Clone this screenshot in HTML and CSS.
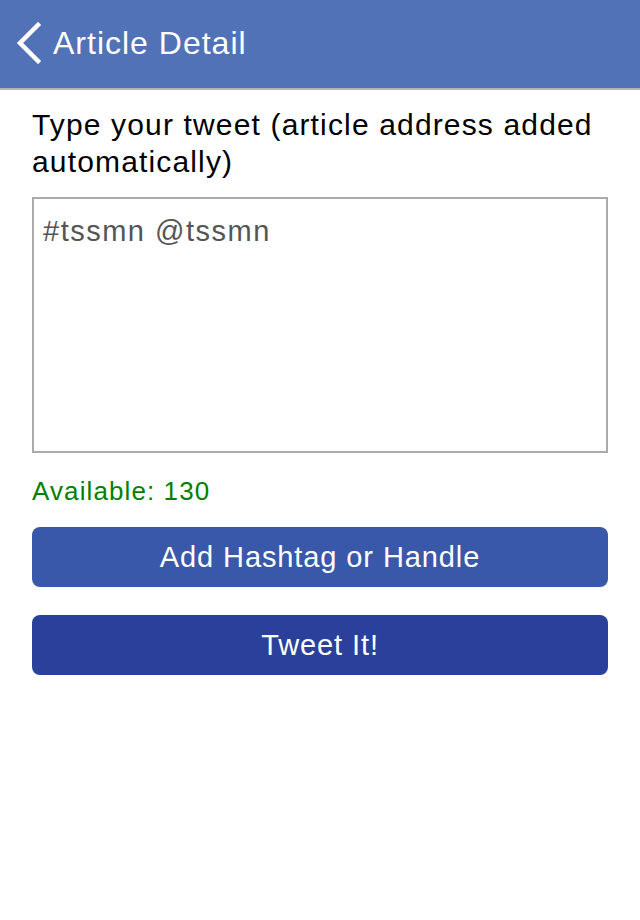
FILE: index.html
```html
<!DOCTYPE html>
<html lang="en">
<head>
    <meta charset="UTF-8">
    <meta name="viewport" content="width=device-width, initial-scale=1.0">
    <title>Article Detail</title>
    <link rel="stylesheet" href="styles.css">
</head>
<body>
    <header class="nav-bar">
        <button class="back-button">
            <svg class="chevron" width="28" height="42" viewBox="0 0 28 42">
                <path d="M24 3 L6 21 L24 39" fill="none" stroke="#fff" stroke-width="4.5" stroke-linecap="square"/>
            </svg>
            <span class="nav-title">Article Detail</span>
        </button>
    </header>
    <main class="content">
        <p class="label">Type your tweet (article address added automatically)</p>
        <textarea class="tweet-box">#tssmn @tssmn</textarea>
        <p class="counter">Available: 130</p>
        <button class="btn btn-add">Add Hashtag or Handle</button>
        <button class="btn btn-tweet">Tweet It!</button>
    </main>
</body>
</html>
```

FILE: styles.css
```css
body {
    margin: 0;
    padding: 0;
    background-color: #fff;
    font-family: "Liberation Sans", Arial, sans-serif;
    color: #000;
}
.nav-bar {
    height: 88px;
    background-color: #5272b8;
    border-bottom: 2px solid #b4b4b4;
    display: flex;
    align-items: center;
    padding-left: 14px;
}
.back-button {
    display: flex;
    align-items: center;
    gap: 11px;
    background: none;
    border: none;
    padding: 0;
    margin-top: -2px;
    color: #fff;
    font-family: inherit;
    cursor: pointer;
}
.nav-title {
    font-size: 32px;
    letter-spacing: 1px;
}
.content {
    padding: 16px 32px;
    display: flex;
    flex-direction: column;
}
.label {
    margin: 0;
    font-size: 30px;
    line-height: 37px;
    letter-spacing: 1.15px;
}
.tweet-box {
    margin-top: 17px;
    height: 256px;
    box-sizing: border-box;
    border: 2px solid #aaa;
    border-radius: 0;
    padding: 16px 9px;
    font-family: inherit;
    font-size: 29px;
    letter-spacing: 1.5px;
    color: #555;
    resize: none;
    outline: none;
}
.counter {
    margin: 22px 0 0;
    font-size: 26px;
    line-height: 32px;
    letter-spacing: 1.1px;
    color: #008000;
}
.btn {
    height: 60px;
    border: none;
    border-radius: 8px;
    color: #fff;
    font-family: inherit;
    font-size: 29px;
    letter-spacing: 0.9px;
    cursor: pointer;
}
.btn-add {
    margin-top: 20px;
    background-color: #3a58aa;
}
.btn-tweet {
    margin-top: 28px;
    background-color: #2a409b;
}
```
